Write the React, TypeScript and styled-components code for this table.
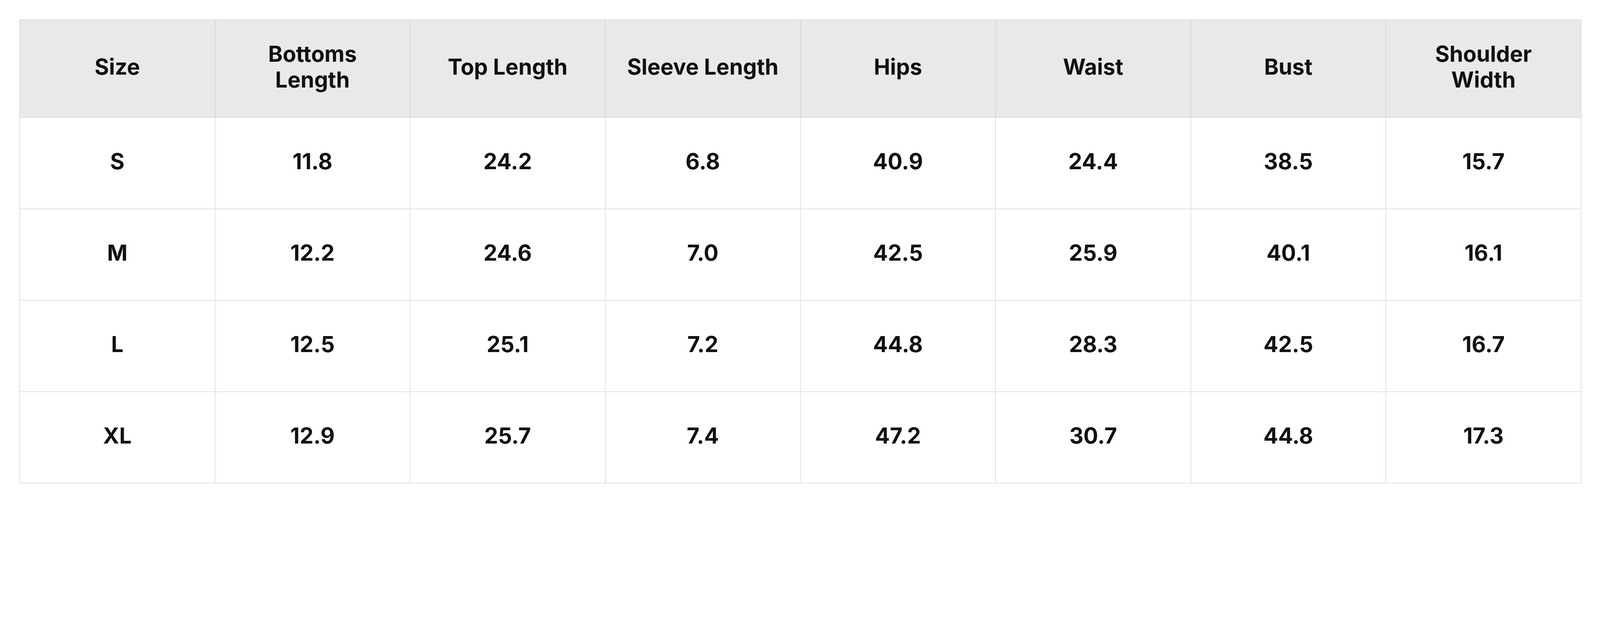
import React from "react";
import styled, { createGlobalStyle } from "styled-components";

const GlobalStyle = createGlobalStyle`
  html, body {
    margin: 0;
    padding: 0;
    background: #ffffff;
  }
  body {
    font-family: Inter, "Noto Sans", "Liberation Sans", sans-serif;
    color: #111111;
  }
`;

const Page = styled.div`
  box-sizing: border-box;
  padding: 50px 48px 0 50px;
  background: #ffffff;
`;

const Table = styled.table`
  width: 100%;
  border-collapse: collapse;
  table-layout: fixed;
  font-family: Inter, "Noto Sans", "Liberation Sans", sans-serif;
  font-weight: 700;
  font-size: 56px;
  line-height: 66px;
  color: #111111;
`;

const HeadCell = styled.th`
  height: 250px;
  padding: 0 18px 9px;
  box-sizing: border-box;
  background: #e9e9e9;
  border: 1.5px solid #c8c8c8;
  text-align: center;
  vertical-align: middle;
  font-weight: 700;
`;

const Cell = styled.td`
  height: 234px;
  padding: 0 18px 9px;
  box-sizing: border-box;
  background: #ffffff;
  border: 1.5px solid #c8c8c8;
  text-align: center;
  vertical-align: middle;
`;

const headers: React.ReactNode[] = [
  "Size",
  <>Bottoms<br />Length</>,
  "Top Length",
  "Sleeve Length",
  "Hips",
  "Waist",
  "Bust",
  <>Shoulder<br />Width</>,
];

const rows: string[][] = [
  ["S", "11.8", "24.2", "6.8", "40.9", "24.4", "38.5", "15.7"],
  ["M", "12.2", "24.6", "7.0", "42.5", "25.9", "40.1", "16.1"],
  ["L", "12.5", "25.1", "7.2", "44.8", "28.3", "42.5", "16.7"],
  ["XL", "12.9", "25.7", "7.4", "47.2", "30.7", "44.8", "17.3"],
];

export default function App() {
  return (
    <>
      <GlobalStyle />
      <Page>
        <Table>
          <thead>
            <tr>
              {headers.map((h, i) => (
                <HeadCell key={i}>{h}</HeadCell>
              ))}
            </tr>
          </thead>
          <tbody>
            {rows.map((r) => (
              <tr key={r[0]}>
                {r.map((c, i) => (
                  <Cell key={i}>{c}</Cell>
                ))}
              </tr>
            ))}
          </tbody>
        </Table>
      </Page>
    </>
  );
}
